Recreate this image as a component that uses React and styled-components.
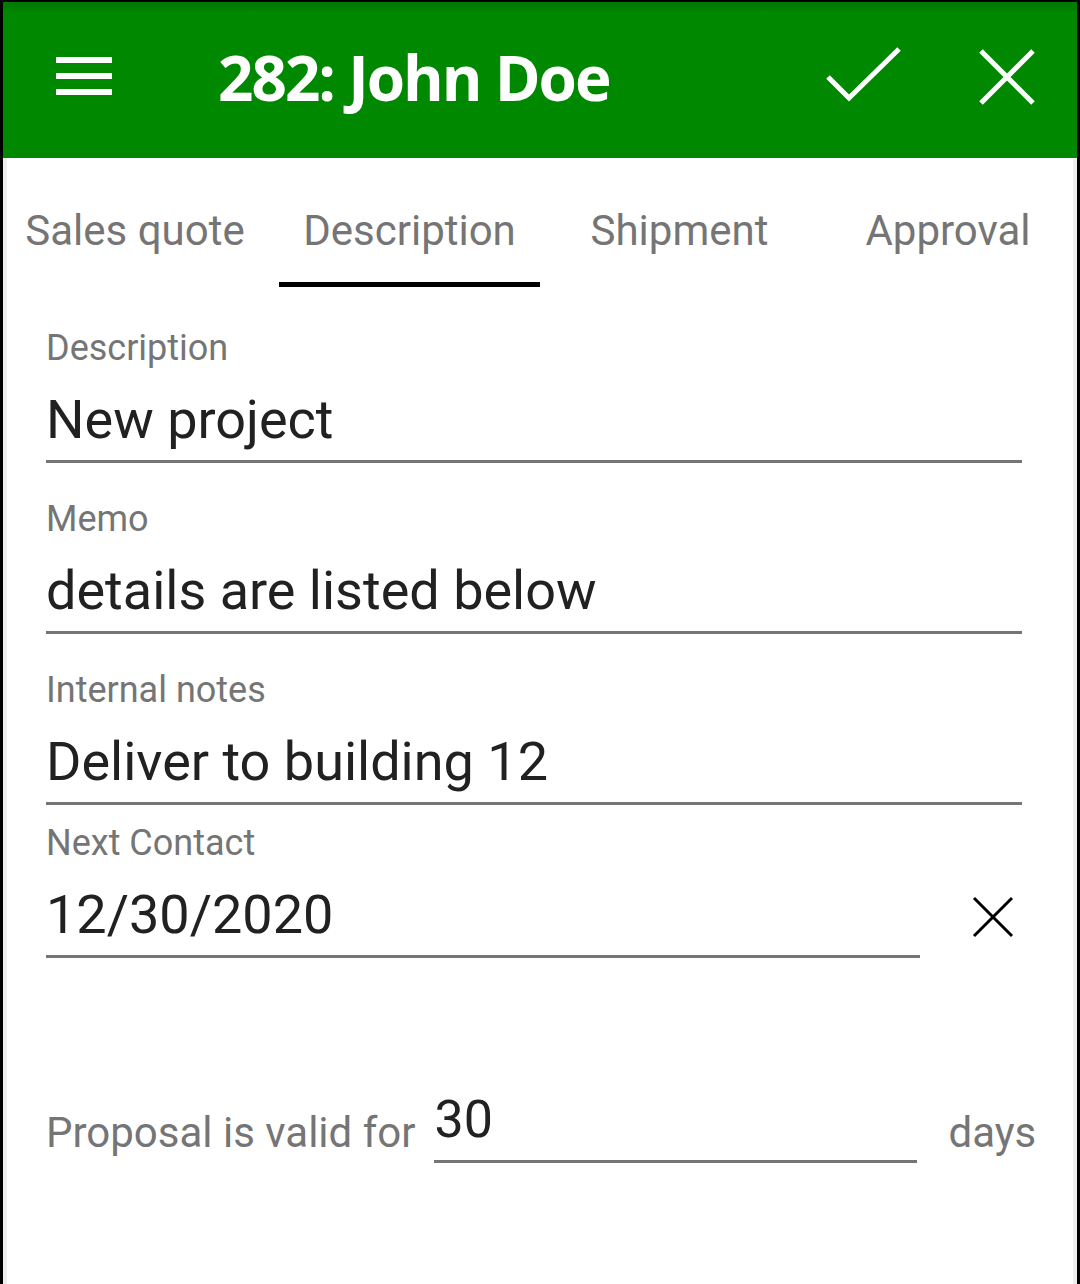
import React from "react";
import styled, { createGlobalStyle } from "styled-components";

const GlobalStyle = createGlobalStyle`
	html, body {
		margin: 0;
		padding: 0;
		background: #fff;
	}
	body {
		font-family: Roboto, "Liberation Sans", sans-serif;
	}
`;

const Frame = styled.div`
	width: 1080px;
	height: 1284px;
	box-sizing: border-box;
	border: 3px solid #000;
	border-top-width: 2px;
	border-bottom: none;
	background: #fff;
	box-shadow: inset 4px 0 0 #eeeeee, inset -4px 0 0 #eeeeee;
	overflow: hidden;
`;

const Header = styled.header`
	height: 156px;
	box-sizing: border-box;
	background: linear-gradient(#007a00 0, #007f00 8px, #008800 9px);
	display: flex;
	align-items: center;
	padding: 0 42px 6px 53px;
	color: #fff;
`;

const IconButton = styled.div`
	display: flex;
	align-items: center;
	justify-content: center;
	flex: none;
`;

const Title = styled.h1`
	flex: 1;
	margin: 0 0 0 106px;
	font-family: "Open Sans", "Noto Sans", sans-serif;
	font-weight: 700;
	font-size: 62px;
	letter-spacing: -2px;
	line-height: 1;
	white-space: nowrap;
`;

const HeaderActions = styled.div`
	display: flex;
	align-items: center;
	gap: 76px;
`;

const Tabs = styled.nav`
	display: flex;
	height: 129px;
`;

const Tab = styled.div`
	width: ${(p) => p.$w}px;
	margin-left: ${(p) => p.$ml || 0}px;
	box-sizing: border-box;
	padding-top: 48px;
	text-align: center;
	font-size: 42px;
	line-height: 50px;
	color: #757575;
	border-bottom: 5px solid ${(p) => (p.$active ? "#000" : "transparent")};
	white-space: nowrap;
`;

const Content = styled.main`
	padding: 41px 55px 0 43px;
`;

const Field = styled.div`
	margin-bottom: ${(p) => p.$mb}px;
`;

const Label = styled.div`
	font-size: 36px;
	line-height: 40px;
	color: #757575;
`;

const InputRow = styled.div`
	display: flex;
	align-items: center;
`;

const Value = styled.div`
	flex: 1;
	margin-top: 20px;
	padding-bottom: 8px;
	font-size: 54px;
	line-height: 64px;
	color: #212121;
	border-bottom: 3px solid #757575;
	white-space: nowrap;
`;

const ClearButton = styled.div`
	width: 102px;
	display: flex;
	justify-content: flex-end;
	padding-top: 12px;
	padding-right: 8px;
	box-sizing: border-box;
`;

const ValidRow = styled.div`
	display: flex;
	align-items: flex-end;
	margin: 132px -14px 0 0;
`;

const InlineText = styled.span`
	flex: none;
	font-size: 42px;
	line-height: 48px;
	color: #757575;
	margin-bottom: 6px;
	white-space: nowrap;
`;

const SmallInput = styled.div`
	flex: none;
	width: 483px;
	margin: 0 ${(p) => p.$mr}px 0 19px;
	padding-bottom: 10px;
	font-size: 52px;
	line-height: 60px;
	color: #212121;
	border-bottom: 3px solid #757575;
`;

const MenuIcon = () => (
	<svg width="56" height="40" viewBox="0 0 56 40">
		<rect x="0" y="0" width="56" height="6" fill="#fff" />
		<rect x="0" y="16" width="56" height="6" fill="#fff" />
		<rect x="0" y="32" width="56" height="6" fill="#fff" />
	</svg>
);

const CheckIcon = () => (
	<svg width="78" height="62" viewBox="0 0 78 62">
		<path d="M3 31 L24 52 L74 3" fill="none" stroke="#fff" strokeWidth="5" />
	</svg>
);

const CloseIcon = ({ size, stroke, color }) => (
	<svg width={size} height={size} viewBox={`0 0 ${size} ${size}`}>
		<path
			d={`M2 2 L${size - 2} ${size - 2} M${size - 2} 2 L2 ${size - 2}`}
			stroke={color}
			strokeWidth={stroke}
			fill="none"
		/>
	</svg>
);

const App = () => {
	return (
		<>
			<GlobalStyle />
			<Frame>
				<Header>
					<IconButton>
						<MenuIcon />
					</IconButton>
					<Title>282: John Doe</Title>
					<HeaderActions>
						<IconButton>
							<CheckIcon />
						</IconButton>
						<IconButton>
							<CloseIcon size={56} stroke={5} color="#fff" />
						</IconButton>
					</HeaderActions>
				</Header>

				<Tabs>
					<Tab $w={264}>Sales quote</Tab>
					<Tab $w={261} $ml={12} $active>
						Description
					</Tab>
					<Tab $w={279}>Shipment</Tab>
					<Tab $w={258}>Approval</Tab>
				</Tabs>

				<Content>
					<Field $mb={36}>
						<Label>Description</Label>
						<Value>New project</Value>
					</Field>
					<Field $mb={36}>
						<Label>Memo</Label>
						<Value>details are listed below</Value>
					</Field>
					<Field $mb={18}>
						<Label>Internal notes</Label>
						<Value>Deliver to building 12</Value>
					</Field>
					<Field $mb={0}>
						<Label>Next Contact</Label>
						<InputRow>
							<Value>12/30/2020</Value>
							<ClearButton>
								<CloseIcon size={42} stroke={3} color="#000" />
							</ClearButton>
						</InputRow>
					</Field>

					<ValidRow>
						<InlineText>Proposal is valid for</InlineText>
						<SmallInput $mr={31}>30</SmallInput>
						<InlineText>days</InlineText>
					</ValidRow>
				</Content>
			</Frame>
		</>
	);
};

export default App;
